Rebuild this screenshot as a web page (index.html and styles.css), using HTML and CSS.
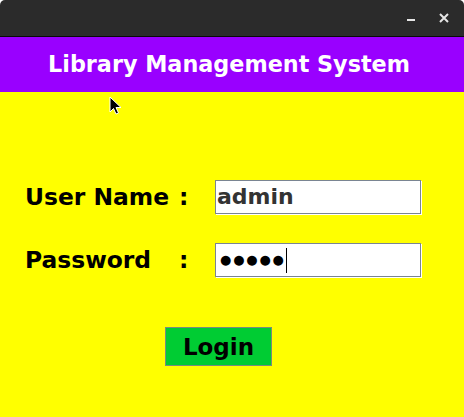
FILE: index.html
```html
<!DOCTYPE html>
<html>
<head>
<meta charset="utf-8">
<link rel="stylesheet" href="styles.css">
</head>
<body>
<div class="window">
  <div class="titlebar">
    <svg class="min" width="8" height="3" viewBox="0 0 8 3"><rect x="0" y="0" width="8" height="2" fill="#e6e6e6"/></svg>
    <svg class="close" width="10" height="10" viewBox="0 0 10 10"><path d="M1 1 L9 9 M9 1 L1 9" stroke="#e6e6e6" stroke-width="2"/></svg>
  </div>
  <div class="header">Library Management System</div>
  <div class="content">
    <div class="form">
      <span class="label">User Name</span><span class="colon">:</span>
      <div class="field">admin</div>
      <span class="label">Password</span><span class="colon">:</span>
      <div class="field pass"><span class="dots">●●●●●</span><span class="caret"></span></div>
    </div>
    <button class="login">Login</button>
  </div>
  <svg class="pointer" width="14" height="20" viewBox="0 0 14 20"><path d="M1 1 L1 16 L4.5 12.5 L7 18 L9.5 17 L7 11.5 L12 11.5 Z" fill="#000" stroke="#fff" stroke-width="1"/></svg>
</div>
</body>
</html>
```
FILE: styles.css
```css
html, body {
  margin: 0;
  padding: 0;
  background: #ffffff;
}
.window {
  position: relative;
  width: 464px;
  height: 417px;
  display: flex;
  flex-direction: column;
  font-family: "DejaVu Sans", sans-serif;
  font-weight: bold;
  overflow: hidden;
}
.titlebar {
  height: 36px;
  background: #2b2b2b;
  border-bottom: 1px solid #0a0a0a;
  border-radius: 5px 5px 0 0;
  display: flex;
  align-items: center;
  justify-content: flex-end;
  padding-right: 15px;
}
.titlebar .min {
  margin-top: 4px;
  margin-right: 24px;
}
.titlebar .close {
  margin-bottom: 1px;
}
.header {
  height: 55px;
  background: #9900ff;
  color: #ffffff;
  font-size: 22.3px;
  line-height: 55px;
  text-align: center;
  padding-right: 6px;
}
.content {
  flex: 1;
  background: #ffff00;
  padding-top: 88px;
}
.form {
  display: grid;
  grid-template-columns: 154px 36px 206px;
  row-gap: 29px;
  align-items: center;
  padding-left: 25px;
  font-size: 23.4px;
  color: #000;
}
.field {
  height: 32px;
  border: 1px solid #7a8592;
  box-shadow: 1px 1px 0 #ffffff;
  background: #ffffff;
  color: #333333;
  font-size: 22px;
  line-height: 32px;
  padding-left: 1px;
  box-sizing: content-box;
  display: flex;
  align-items: center;
}
.field.pass {
  color: #000;
}
.dots {
  font-size: 13px;
  letter-spacing: 1.8px;
  padding-left: 3px;
}
.caret {
  width: 1px;
  height: 25px;
  background: #000;
  margin-left: 0;
}
.login {
  display: block;
  margin: 50px 0 0 165px;
  width: 107px;
  height: 39px;
  background: #00cc33;
  border: 1px solid #7a8a80;
  font-family: "DejaVu Sans", sans-serif;
  font-weight: bold;
  font-size: 23px;
  color: #000;
  padding: 0;
}
.pointer {
  position: absolute;
  left: 109px;
  top: 96px;
}
```
